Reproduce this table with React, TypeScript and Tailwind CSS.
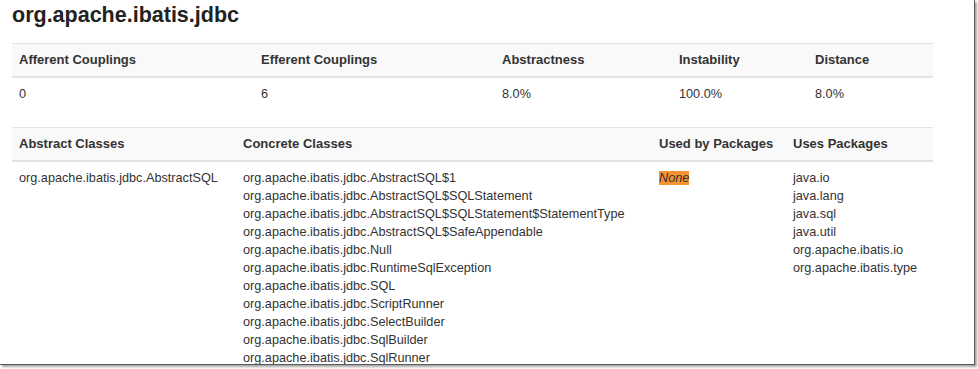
import React from "react";

const font = { fontFamily: '"Liberation Sans", Arial, Helvetica, sans-serif' };

const concrete = [
  "org.apache.ibatis.jdbc.AbstractSQL$1",
  "org.apache.ibatis.jdbc.AbstractSQL$SQLStatement",
  "org.apache.ibatis.jdbc.AbstractSQL$SQLStatement$StatementType",
  "org.apache.ibatis.jdbc.AbstractSQL$SafeAppendable",
  "org.apache.ibatis.jdbc.Null",
  "org.apache.ibatis.jdbc.RuntimeSqlException",
  "org.apache.ibatis.jdbc.SQL",
  "org.apache.ibatis.jdbc.ScriptRunner",
  "org.apache.ibatis.jdbc.SelectBuilder",
  "org.apache.ibatis.jdbc.SqlBuilder",
  "org.apache.ibatis.jdbc.SqlRunner",
];

const uses = [
  "java.io",
  "java.lang",
  "java.sql",
  "java.util",
  "org.apache.ibatis.io",
  "org.apache.ibatis.type",
];

function Th({ children }: { children: React.ReactNode }) {
  return <div className="px-[7px] py-[7px] font-bold text-[13px] leading-[18px]">{children}</div>;
}

export default function App() {
  return (
    <div className="w-[978px] h-[369px] bg-white overflow-hidden" style={font}>
      <div className="w-[975px] h-[365px] overflow-hidden border-r border-b border-[#5a5a5a] shadow-[2px_2px_2px_rgba(0,0,0,0.35)] bg-white text-[#333] text-[12.7px]">
        <h1 className="ml-[12px] mt-[2px] text-[21.5px] leading-[26px] font-bold text-[#222]">
          org.apache.ibatis.jdbc
        </h1>

        <div className="ml-[12px] mt-[15px] w-[921px]">
          <div className="grid grid-cols-[242px_241px_177px_136px_125px] bg-[#f9f9f9] border-t border-b-2 border-[#e3e3e3]">
            <Th>Afferent Couplings</Th>
            <Th>Efferent Couplings</Th>
            <Th>Abstractness</Th>
            <Th>Instability</Th>
            <Th>Distance</Th>
          </div>
          <div className="grid grid-cols-[242px_241px_177px_136px_125px] leading-[18px]">
            <div className="px-[7px] pt-[7px] pb-[7px]">0</div>
            <div className="px-[7px] pt-[7px] pb-[7px]">6</div>
            <div className="px-[7px] pt-[7px] pb-[7px]">8.0%</div>
            <div className="px-[7px] pt-[7px] pb-[7px]">100.0%</div>
            <div className="px-[7px] pt-[7px] pb-[7px]">8.0%</div>
          </div>
        </div>

        <div className="ml-[12px] mt-[17px] w-[921px]">
          <div className="grid grid-cols-[224px_416px_134px_147px] bg-[#f9f9f9] border-t border-b-2 border-[#e3e3e3]">
            <Th>Abstract Classes</Th>
            <Th>Concrete Classes</Th>
            <Th>Used by Packages</Th>
            <Th>Uses Packages</Th>
          </div>
          <div className="grid grid-cols-[224px_416px_134px_147px] leading-[18px]">
            <div className="px-[7px] pt-[7px]">org.apache.ibatis.jdbc.AbstractSQL</div>
            <div className="px-[7px] pt-[7px] flex flex-col">
              {concrete.map((c) => (
                <span key={c}>{c}</span>
              ))}
            </div>
            <div className="px-[7px] pt-[7px]">
              <span className="italic bg-[#f6922f] text-[#333]">None</span>
            </div>
            <div className="px-[7px] pt-[7px] flex flex-col">
              {uses.map((u) => (
                <span key={u}>{u}</span>
              ))}
            </div>
          </div>
        </div>
      </div>
    </div>
  );
}
